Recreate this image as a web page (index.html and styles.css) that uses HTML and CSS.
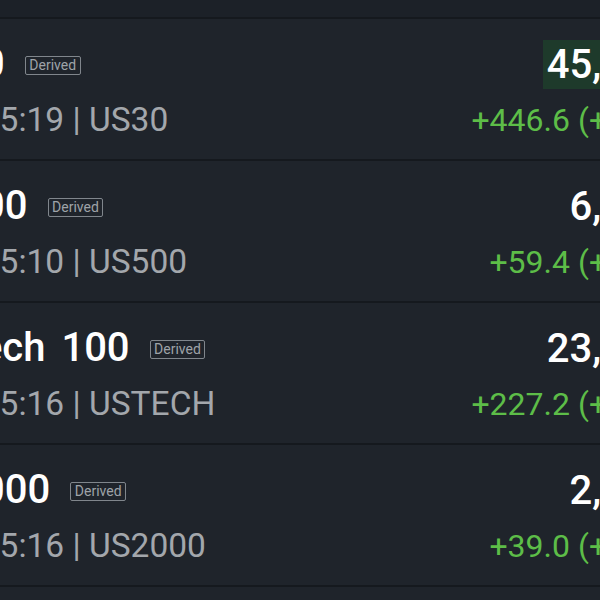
FILE: index.html
```html
<!DOCTYPE html>
<html lang="en">
<head>
<meta charset="utf-8">
<title>Derived indices</title>
<link rel="stylesheet" href="styles.css">
</head>
<body>
<div class="viewport">
  <div class="top-strip"></div>
  <ul class="list">
    <li class="row">
      <div class="left">
        <div class="title-line"><span class="title">US 30</span><span class="badge">Derived</span></div>
        <div class="sub">10:45:19 | US30</div>
      </div>
      <div class="right">
        <div class="price flash">45,012.35</div>
        <div class="change">+446.6 (+1.00%)</div>
      </div>
    </li>
    <li class="row">
      <div class="left">
        <div class="title-line"><span class="title">US 500</span><span class="badge">Derived</span></div>
        <div class="sub">10:45:10 | US500</div>
      </div>
      <div class="right">
        <div class="price">6,012.35</div>
        <div class="change">+59.4 (+1.00%)</div>
      </div>
    </li>
    <li class="row">
      <div class="left">
        <div class="title-line"><span class="title">US Tech 100</span><span class="badge">Derived</span></div>
        <div class="sub">10:45:16 | USTECH</div>
      </div>
      <div class="right">
        <div class="price">23,012.35</div>
        <div class="change">+227.2 (+1.00%)</div>
      </div>
    </li>
    <li class="row">
      <div class="left">
        <div class="title-line"><span class="title">US 2000</span><span class="badge">Derived</span></div>
        <div class="sub">10:45:16 | US2000</div>
      </div>
      <div class="right">
        <div class="price">2,012.35</div>
        <div class="change">+39.0 (+1.00%)</div>
      </div>
    </li>
  </ul>
</div>
</body>
</html>
```
FILE: styles.css
```css
html, body {
  margin: 0;
  padding: 0;
  background: #1f242b;
  overflow: hidden;
  width: 600px;
  height: 600px;
}
body {
  font-family: Roboto, "Noto Sans", sans-serif;
}
.viewport {
  width: 600px;
  height: 600px;
  overflow: hidden;
}
.top-strip {
  height: 17px;
  background: #1c2128;
  border-bottom: 2px solid #15191e;
}
.list {
  list-style: none;
  margin: 0 0 0 -107px;
  padding: 0;
  width: 837px;
}
.row {
  display: flex;
  justify-content: space-between;
  box-sizing: border-box;
  height: 142px;
  padding: 21px 0 0;
  border-bottom: 2px solid #15191e;
  background: #1f242b;
}
.left, .right {
  display: flex;
  flex-direction: column;
  white-space: nowrap;
}
.right {
  align-items: flex-end;
}
.title-line {
  display: flex;
  align-items: center;
  height: 48px;
}
.title {
  font-size: 40px;
  font-weight: 500;
  line-height: 48px;
  word-spacing: 6px;
  color: #ffffff;
}
.badge {
  margin-left: 20px;
  margin-top: 2px;
  font-size: 14px;
  line-height: 17px;
  color: #9ea3a8;
  border: 1px solid #80868c;
  border-radius: 2px;
  padding: 0 3.5px;
}
.sub {
  margin-top: 12px;
  font-size: 33.5px;
  line-height: 40px;
  color: #a3a7ac;
  padding-left: 42px;
}
.price {
  font-size: 40px;
  font-weight: 500;
  line-height: 49px;
  color: #ffffff;
  padding: 0 4px;
}
.price.flash {
  background: #1e3a2b;
}
.change {
  margin-top: 11px;
  font-size: 32px;
  line-height: 40px;
  color: #5dbd48;
  padding-right: 26px;
}
```
